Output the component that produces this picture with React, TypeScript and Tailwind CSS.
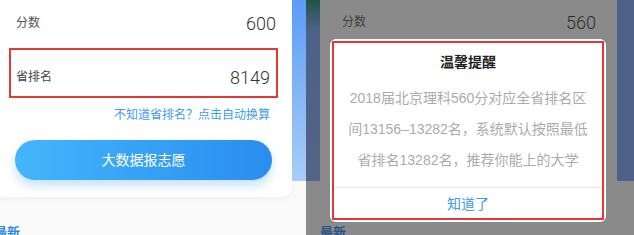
import React from 'react'

const font = { fontFamily: '"Liberation Sans", "Noto Sans CJK SC", sans-serif' }
const digits = { fontFamily: 'Roboto, "Liberation Sans", sans-serif' }

function LeftScreen() {
  return (
    <div className="relative w-[306px] h-full overflow-hidden bg-[#fafafa] flex flex-col">
      <div className="flex items-start">
        <div className="w-[292px] h-[197px] bg-white rounded-br-[10px] shadow-[0_2px_8px_rgba(0,0,0,0.05)] flex flex-col">
          <div className="h-[46px] px-[16px] flex items-center justify-between">
            <span className="text-[12px] text-[#555]">分数</span>
            <span className="text-[18px] font-light text-[#333]" style={digits}>600</span>
          </div>
          <div className="ml-[9px] mt-[2px] w-[269px] h-[50px] border-2 border-[#e53935] flex items-center justify-between pl-[5px] pr-[6px] pt-[8px]">
            <span className="text-[12px] text-[#444]">省排名</span>
            <span className="text-[18px] font-light text-[#333]" style={digits}>8149</span>
          </div>
          <div className="mt-[9px] h-[16px] pr-[22px] text-right text-[12px] leading-[16px] text-[#3e9bf0]">
            不知道省排名？点击自动换算
          </div>
          <div className="mt-[17px] ml-[15px] w-[257px] h-[40px] rounded-full bg-gradient-to-r from-[#45b6fb] to-[#2a8cf0] shadow-[0_6px_10px_rgba(42,140,240,0.25)] flex items-center justify-center text-[14px] text-white">
            大数据报志愿
          </div>
        </div>
        <div className="w-[14px] h-[181px] bg-gradient-to-b from-[#5b9cf5] to-[#a8cdf7]" />
      </div>
      <div className="mt-[28px] -ml-[6px] text-[13px] font-bold leading-[16px] text-[#2f86e6]">最新</div>
    </div>
  )
}

function RightScreen() {
  return (
    <div className="relative flex-1 h-full overflow-hidden bg-white">
      <div className="flex items-start">
        <div className="w-[14px] h-[181px] bg-gradient-to-b from-[#3a9a7c] via-[#8fb2fc] via-[16%] to-[#9ab8f5]" />
        <div className="w-[297px] h-[197px] bg-white flex flex-col">
          <div className="h-[44px] pl-[22px] pr-[21px] flex items-center justify-between">
            <span className="text-[12px] text-[#777]">分数</span>
            <span className="text-[18px] font-light text-[#555]" style={digits}>560</span>
          </div>
        </div>
        <div className="w-[17px] h-[181px] bg-[#8fb2fc]" />
      </div>
      <div className="mt-[28px] ml-[14px] text-[13px] font-bold leading-[16px] text-[#4d9af8]">最新</div>

      <div className="absolute inset-0 bg-black/[0.46]" />

      <div className="absolute left-[24px] top-[39px] w-[276px] h-[183px] rounded-[6px] bg-white p-[2px]">
        <div className="h-full border-2 border-[#e5383b] flex flex-col">
          <div className="h-[38px] flex items-center justify-center text-[14px] font-bold text-[#222]">
            温馨提醒
          </div>
          <div className="pt-[2px] text-center text-[14px] leading-[31px] text-[#ababab]">
            <div>2018届北京理科560分对应全省排名区</div>
            <div>间13156–13282名，系统默认按照最低</div>
            <div>省排名13282名，推荐你能上的大学</div>
          </div>
          <div className="mt-[11px] border-t border-[#e8e8e8] flex-1 flex items-center justify-center pt-[2px] text-[14px] text-[#3a9ae8]">
            知道了
          </div>
        </div>
      </div>
    </div>
  )
}

export default function App() {
  return (
    <div className="w-[634px] h-[235px] overflow-hidden flex" style={font}>
      <LeftScreen />
      <RightScreen />
    </div>
  )
}
